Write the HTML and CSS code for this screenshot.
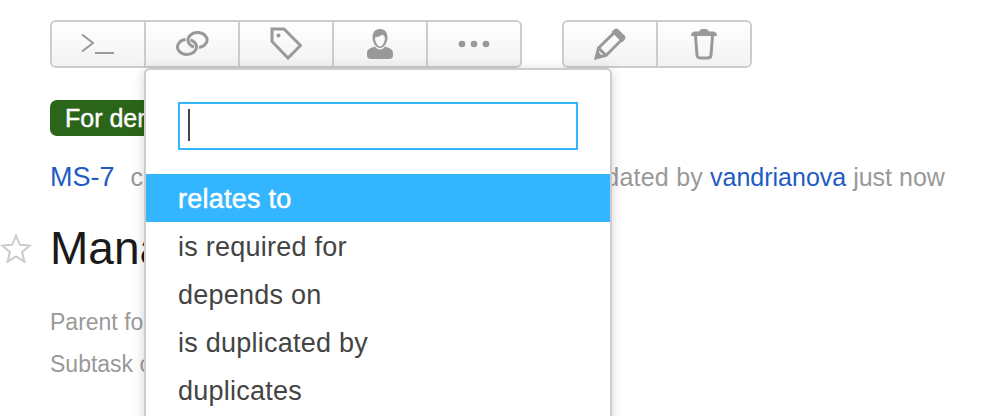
FILE: index.html
```html
<!DOCTYPE html>
<html lang="en">
<head>
  <meta charset="utf-8" />
  <title>MS-7</title>
  <link rel="stylesheet" href="styles.css">
</head>
<body>
  <div class="toolbar">
    <div class="btn-group">
      <button class="tool-btn">
        <svg width="36" height="24" viewBox="0 0 36 24" class="icon"><path d="M2 2.500 L13 11 L2 19.500" /><path d="M15 21 H34" /></svg>
      </button>
      <button class="tool-btn">
        <svg width="34" height="26" viewBox="0 0 34 26" class="icon icon-thick"><path d="M15.500 9.030 A9.500 7.500 0 1 1 10.500 8.600" /><path d="M19 15.970 A9.500 7.500 0 1 1 24 16.400" /></svg>
      </button>
      <button class="tool-btn">
        <svg width="32" height="34" viewBox="0 0 32 34" class="icon icon-thick"><path d="M2 2 H14 L30.500 18.500 L18 31 L2 14.500 Z" /><circle cx="8.500" cy="8.500" r="2" class="fill" /></svg>
      </button>
      <button class="tool-btn">
        <svg width="28" height="32" viewBox="0 0 28 32" class="fill"><path fill-rule="evenodd" d="M14 1 C8.500 1 6.500 5 6.500 9.500 C6.500 14 9.500 20 14 20 C18.500 20 21.500 14 21.500 9.500 C21.500 5 19.500 1 14 1 Z M9 9.500 C11 9 15 8 16.500 6.500 C17.500 7.500 18.500 8.500 19 9.500 C19 13 17 18.500 14 18.500 C11 18.500 9 13 9 9.500 Z" /><path d="M9 18.500 C5 20 1 21 1 25 V28 C1 30 3 31 5 31 H23 C25 31 27 30 27 28 V25 C27 21 23 20 19 18.500 C18 20.500 16 21.500 14 21.500 C12 21.500 10 20.500 9 18.500 Z" /></svg>
      </button>
      <button class="tool-btn">
        <svg width="32" height="8" viewBox="0 0 32 8" class="fill"><circle cx="4" cy="4" r="3.300" /><circle cx="16" cy="4" r="3.300" /><circle cx="28" cy="4" r="3.300" /></svg>
      </button>
    </div>
    <div class="btn-group">
      <button class="tool-btn">
        <svg width="34" height="34" viewBox="0 0 34 34" class="icon icon-thick"><path d="M3 31 L5.500 21 L22 5 L29 12.500 L13 28.500 Z" /><path d="M21 2.500 Q23.500 0.500 25.500 2.500 L31.500 8.500 Q33.500 10.500 31.500 13 L29 15.500 L18.500 5 Z" class="fill" /><path d="M5.500 21 L13 28.500" /><path d="M2 32 L4 23.500 L10.500 30 Z" class="fill" /></svg>
      </button>
      <button class="tool-btn">
        <svg width="28" height="32" viewBox="0 0 28 32" class="icon icon-thick"><path d="M1 8 Q1 3.500 5 3.500 H9 Q10 1 12 1 H16 Q18 1 19 3.500 H23 Q27 3.500 27 8 Z" class="fill" /><path d="M5.500 8 L7 27 Q7.300 30 10 30 H18 Q20.700 30 21 27 L22.500 8" /></svg>
      </button>
    </div>
  </div>

  <div class="issue">
    <div class="tag-row"><span class="tag">For demo</span></div>
    <div class="meta"><a class="key">MS-7</a><span class="created">created by vandrianova 2 minutes ago, updated by</span> <a class="user">vandrianova</a> just now</div>
    <div class="title-row">
      <svg width="32" height="30" viewBox="0 0 32 30" class="star"><path d="M16 2.500 L19.800 11.800 L29.800 12.500 L22.100 19 L24.500 28.700 L16 23.400 L7.500 28.700 L9.900 19 L2.200 12.500 L12.200 11.800 Z" /></svg>
      <h1>Manage links</h1>
    </div>
    <div class="links">Parent for</div>
    <div class="links">Subtask of</div>
  </div>

  <div class="link-menu">
    <div class="search-wrap"><div class="search"><span class="caret"></span></div></div>
    <ul>
      <li class="active">relates to</li>
      <li>is required for</li>
      <li>depends on</li>
      <li>is duplicated by</li>
      <li>duplicates</li>
    </ul>
  </div>
</body>
</html>
```
FILE: styles.css
```css
html,body{height:100%}
body{
  margin:0; height:416px; overflow:hidden; background:#fff;
  padding:20px 0 0 50px; box-sizing:border-box;
  font-family:"Liberation Sans",Arial,sans-serif;
  color:#333;
}

.toolbar{ display:flex; gap:40px; }
.btn-group{
  display:flex; height:48px; box-sizing:border-box;
  border:2px solid #ccc; border-radius:6px; overflow:hidden;
}
.tool-btn{
  width:94px; padding:0; border:0; border-right:2px solid #ccc;
  display:flex; align-items:center; justify-content:center;
  background:linear-gradient(180deg,#fff 0%,#f2f2f2 100%);
}
.btn-group .tool-btn:last-child{ border-right:0; width:92px; }

.icon{ fill:none; stroke:#999; stroke-width:2; }
.icon-thick{ stroke-width:3; }
.fill{ fill:#999; }
.icon .fill{ stroke:none; }

.issue{ padding-top:32px; }
.tag-row{ height:36px; }
.tag{
  display:inline-block; height:36px; line-height:36px; padding:0 15px;
  background:#2a6519; color:#fff; border-radius:7px; font-size:25px;
  -webkit-text-stroke:0.4px #fff;
}
.meta{ margin-top:23px; font-size:25px; line-height:36px; color:#999; white-space:nowrap; }
.key,.user{ color:#1f5bc4; }
.key{ font-size:27px; }
.created{ margin-left:16px; letter-spacing:.23px; }

.title-row{ display:flex; align-items:center; margin:25px 0 0 -50px; }
.star{ fill:#fff; stroke:#ccc; stroke-width:2; }
.title-row h1{ margin:0 0 0 18px; font-size:46px; line-height:56px; font-weight:400; color:#1a1a1a; }

.links{ font-size:23px; line-height:28px; color:#999; margin-top:14px; }
.title-row + .links{ margin-top:32px; }

/* dropdown, sits over the issue header */
.link-menu{
  position:absolute; left:144px; top:68px; width:468px; height:360px; box-sizing:border-box;
  background:#fff; border:2px solid #ccc; border-radius:6px;
  box-shadow:0 2px 12px rgba(0,0,0,0.18);
}
.search-wrap{ padding:32px 32px 24px; }
.search{
  height:48px; box-sizing:border-box; border:2px solid #33b5ff;
  padding:5px 8px;
}
.caret{ display:block; width:2px; height:32px; background:#444; }
.link-menu ul{ list-style:none; margin:0; padding:0; }
.link-menu li{ height:48px; line-height:50px; padding:0 32px; font-size:27px; letter-spacing:.25px; color:#444; }
.link-menu li.active{ background:#33b5ff; color:#fff; -webkit-text-stroke:0.5px #fff; }
```
